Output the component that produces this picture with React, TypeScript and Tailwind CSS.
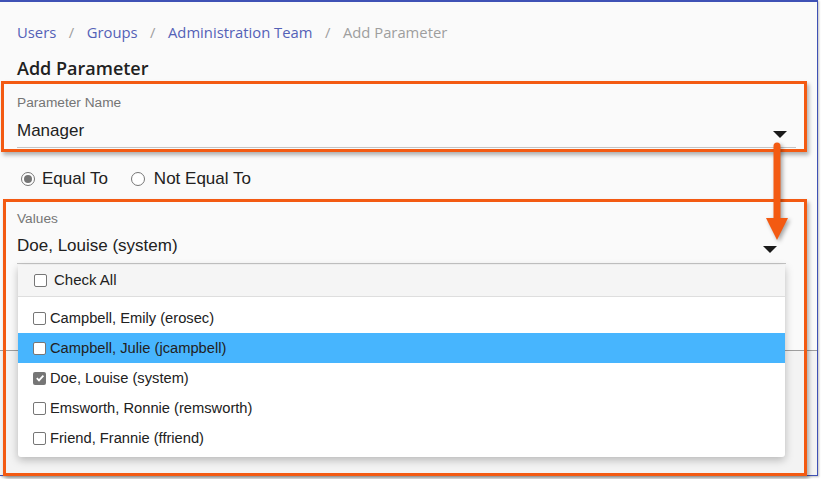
import React from "react";

const Caret = ({ w = 14, h = 7 }: { w?: number; h?: number }) => (
  <svg width={w} height={h} viewBox={`0 0 ${w} ${h}`}>
    <polygon points={`0,0 ${w},0 ${w / 2},${h}`} fill="#1a1a1a" />
  </svg>
);

const Box = ({ checked = false }: { checked?: boolean }) =>
  checked ? (
    <span className="w-[13px] h-[13px] rounded-[2px] bg-[#767676] flex items-center justify-center shrink-0">
      <svg width="10" height="10" viewBox="0 0 10 10">
        <path d="M1.8 5.2 L4 7.4 L8.4 2.6" stroke="#fff" strokeWidth="1.8" fill="none" />
      </svg>
    </span>
  ) : (
    <span className="w-[13px] h-[13px] rounded-[2px] border border-[#767676] bg-white shrink-0" />
  );

const Radio = ({ on = false }: { on?: boolean }) => (
  <span className="w-[14px] h-[14px] rounded-full border border-[#767676] bg-white flex items-center justify-center shrink-0">
    {on && <span className="w-[8px] h-[8px] rounded-full bg-[#767676]" />}
  </span>
);

const items = [
  { t: "Campbell, Emily (erosec)" },
  { t: "Campbell, Julie (jcampbell)", hl: true },
  { t: "Doe, Louise (system)", c: true },
  { t: "Emsworth, Ronnie (remsworth)" },
  { t: "Friend, Frannie (ffriend)" },
];

export default function App() {
  const arial = { fontFamily: '"Liberation Sans", Arial, sans-serif' };
  return (
    <div className="w-[821px] h-[479px] bg-white overflow-hidden">
      <div className="relative w-[818px] h-[476px] bg-[#fafafa] border-t-2 border-r border-b border-[#3f51b5] shadow-[1px_1px_2px_rgba(0,0,0,0.25)]">
        <div className="pl-[17px] pr-[21px]" style={arial}>
          {/* breadcrumb */}
          <div
            className="flex items-center h-[20px] mt-[20px] text-[14.8px] text-[#5461b7]"
            style={{ fontFamily: '"Open Sans", sans-serif' }}
          >
            <span>Users</span>
            <span className="mx-[12.5px] text-[#9e9e9e]">/</span>
            <span>Groups</span>
            <span className="mx-[12.5px] text-[#9e9e9e]">/</span>
            <span>Administration Team</span>
            <span className="mx-[12.5px] text-[#9e9e9e]">/</span>
            <span className="text-[#9e9e9e]">Add Parameter</span>
          </div>
          {/* heading */}
          <div
            className="mt-[14px] h-[24px] leading-[24px] text-[18px] font-semibold text-[#212121]"
            style={{ fontFamily: '"Open Sans", sans-serif' }}
          >
            Add Parameter
          </div>
          {/* field 1 */}
          <div className="mt-[15px]">
            <div className="h-[16px] leading-[16px] text-[13.7px] text-[#757575]">Parameter Name</div>
            <div className="flex items-center justify-between mt-[11px] h-[18px] box-content pb-[7px] border-b border-[#c4c4c4]">
              <span className="text-[17px] leading-[18px] text-[#212121]">Manager</span>
              <span className="mt-[6px] mr-[9px] flex">
                <Caret w={14} h={7} />
              </span>
            </div>
          </div>
          {/* radios */}
          <div className="flex items-center h-[20px] mt-[21px] text-[17px] text-[#212121] pl-[4px]">
            <Radio on />
            <span className="ml-[7px]">Equal To</span>
            <span className="ml-[23px]">
              <Radio />
            </span>
            <span className="ml-[9px]">Not Equal To</span>
          </div>
          {/* field 2 */}
          <div className="mt-[22px] mr-[10px]">
            <div className="h-[16px] leading-[16px] text-[13.7px] text-[#757575]">Values</div>
            <div className="flex items-center justify-between mt-[10px] h-[18px] box-content pb-[8px] border-b border-[#c4c4c4]">
              <span className="text-[17px] leading-[18px] text-[#212121]">Doe, Louise (system)</span>
              <span className="mt-[7px] mr-[9px] flex">
                <Caret w={14} h={7} />
              </span>
            </div>
          </div>
        </div>

        {/* background field line behind dropdown */}
        <div className="absolute left-0 right-0 top-[348px] border-t border-[#9e9e9e]" />
        <div className="absolute left-0 right-0 top-[349px] bottom-0 bg-[#f3f3f3]" />

        {/* dropdown */}
        <div
          className="absolute left-[18px] top-[263px] w-[767px] bg-white rounded-b-[3px] shadow-[0_3px_8px_rgba(0,0,0,0.25)] pb-[4px]"
          style={arial}
        >
          <div className="flex items-center h-[32px] bg-[#f5f5f5] border-b border-[#dedede] pl-[16px] text-[15px] text-[#212121]">
            <Box />
            <span className="ml-[7px]">Check All</span>
          </div>
          <div className="pt-[6px]">
            {items.map((it) => (
              <div
                key={it.t}
                className={`flex items-center h-[30px] pl-[15px] text-[14.7px] text-[#212121] ${
                  it.hl ? "bg-[#47b5fe]" : ""
                }`}
              >
                <Box checked={it.c} />
                <span className="ml-[4px]">{it.t}</span>
              </div>
            ))}
          </div>
        </div>

        {/* annotation boxes */}
        <div className="absolute left-[1px] top-[79px] w-[806px] h-[71px] border-[3px] border-[#f35a12] shadow-[2px_3px_4px_rgba(0,0,0,0.3)]" />
        <div className="absolute left-[3px] top-[197px] w-[804px] h-[277px] border-[3px] border-[#f35a12] shadow-[2px_3px_4px_rgba(0,0,0,0.3)]" />

        {/* annotation arrow */}
        <svg
          className="absolute left-[762px] top-[140px]"
          width="30"
          height="104"
          viewBox="0 0 30 104"
          style={{ filter: "drop-shadow(2px 2px 2px rgba(0,0,0,0.35))" }}
        >
          <line x1="15" y1="4" x2="15" y2="80" stroke="#f35a12" strokeWidth="7" strokeLinecap="round" />
          <polygon points="4,76 26,76 15,98" fill="#f35a12" />
        </svg>
      </div>
    </div>
  );
}
